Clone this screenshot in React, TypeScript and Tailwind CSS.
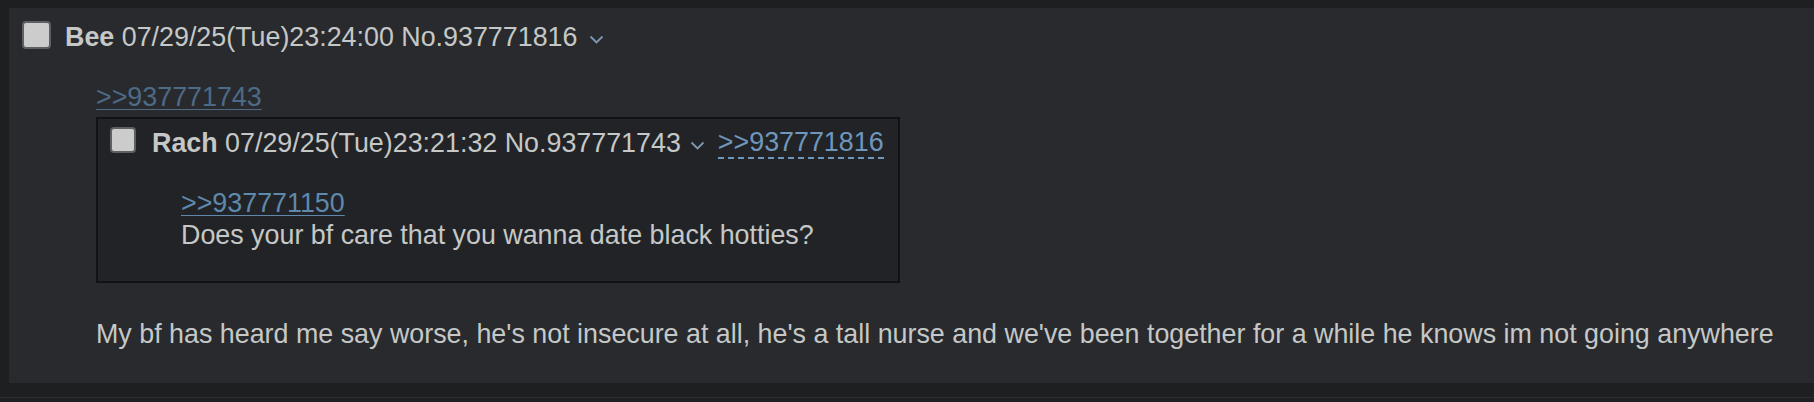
import React from 'react'

function Checkbox({ size }: { size: 'lg' | 'sm' }) {
  return (
    <div
      className={
        size === 'lg'
          ? 'w-[29px] h-[28px] shrink-0 rounded-[4px] border-2 border-[#5e5f62] bg-[#cccccc]'
          : 'w-[26px] h-[26px] shrink-0 rounded-[4px] border-2 border-[#5e5f62] bg-[#cccccc]'
      }
    />
  )
}

function Chevron() {
  return (
    <svg width="15" height="9" viewBox="0 0 15 9" className="shrink-0 mt-[14px]">
      <polyline points="1.5,1.5 7.5,7.5 13.5,1.5" fill="none" stroke="#7d98b3" strokeWidth="1.8" />
    </svg>
  )
}

export default function App() {
  return (
    <div className="h-[402px] overflow-hidden bg-[#1d1f21] pt-2 text-[#c5c8c6] text-[26.85px] leading-[32px] font-['Liberation_Sans',Arial,sans-serif]">
      <div className="ml-[9px] bg-[#282a2e] pt-[13px] pb-[33px]">
        {/* post header */}
        <div className="flex items-start pl-[13px]">
          <Checkbox size="lg" />
          <span className="ml-[14px] whitespace-nowrap">
            <b className="font-bold">Bee</b> 07/29/25(Tue)23:24:00 No.937771816
          </span>
          <span className="ml-[12px]">
            <Chevron />
          </span>
        </div>

        <div className="ml-[87px] mt-[28px]">
          <a className="text-[#4d6a87] underline decoration-1 underline-offset-[3px]">&gt;&gt;937771743</a>

          {/* inlined quote */}
          <div className="mt-[4px] w-[804px] border-2 border-[#111213] bg-[#222326] pt-[8px] pb-[30px] pl-[12px]">
            <div className="flex items-start">
              <Checkbox size="sm" />
              <span className="ml-[16px] whitespace-nowrap">
                <b className="font-bold">Rach</b> 07/29/25(Tue)23:21:32 No.937771743
              </span>
              <span className="ml-[9px]">
                <Chevron />
              </span>
              <a className="ml-[13px] whitespace-nowrap text-[#6f97bc] border-b-2 border-dashed border-[#6f97bc] leading-[30px]">
                &gt;&gt;937771816
              </a>
            </div>
            <div className="ml-[71px] mt-[28px]">
              <a className="text-[#5f89ac] underline decoration-1 underline-offset-[3px]">&gt;&gt;937771150</a>
              <div>Does your bf care that you wanna date black hotties?</div>
            </div>
          </div>

          <div className="mt-[35px] whitespace-nowrap">
            My bf has heard me say worse, he's not insecure at all, he's a tall nurse and we've been together for a while he knows im not going anywhere
          </div>
        </div>
      </div>
      <div className="mt-[14px] h-px bg-[#2b2d31]" />
    </div>
  )
}
